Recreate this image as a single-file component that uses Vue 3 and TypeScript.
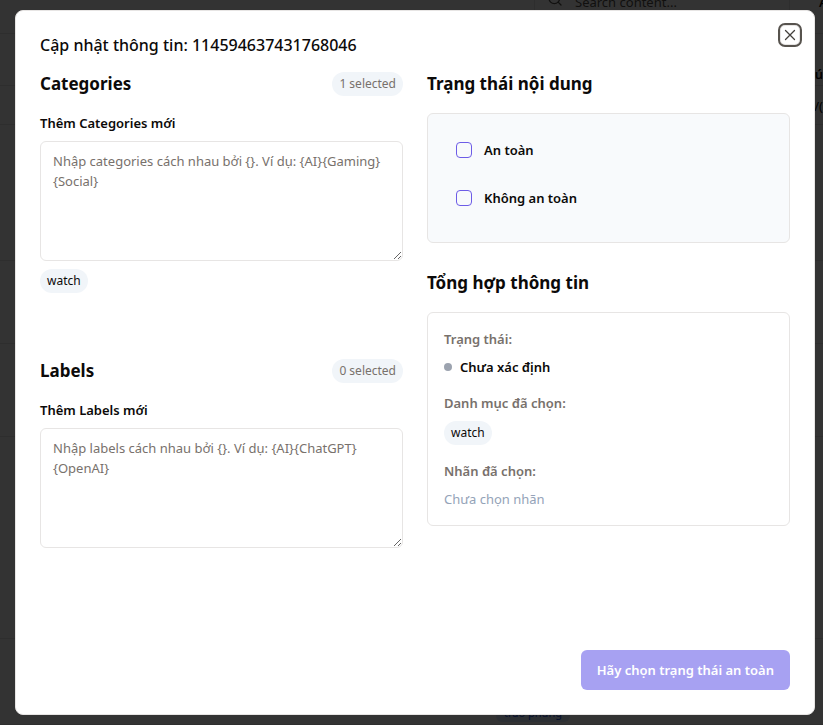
<script setup lang="ts">
import { computed, ref } from 'vue'

const categoriesText = ref('')
const labelsText = ref('')
const categories = ref<string[]>(['watch'])
const labels = ref<string[]>([])
const safe = ref(false)
const unsafe = ref(false)

const status = computed(() =>
  safe.value ? 'An toàn' : unsafe.value ? 'Không an toàn' : 'Chưa xác định'
)
</script>

<template>
  <div class="screen">
    <div class="page" aria-hidden="true">
      <header class="topbar">
        <div class="search">
          <svg width="16" height="16" viewBox="0 0 24 24" fill="none" stroke="currentColor" stroke-width="2" stroke-linecap="round"><circle cx="11" cy="11" r="8" /><path d="m21 21-4.3-4.3" /></svg>
          <span>Search content...</span>
        </div>
        <span class="account">A</span>
      </header>
      <div class="rows">
        <div class="row head">ú</div>
        <div class="row first">)/(</div>
        <div class="row tall"></div>
        <div class="row short"></div>
        <div class="row mid"></div>
        <div class="row large"></div>
        <div class="row last"><span class="topic">trao phung</span></div>
      </div>
    </div>
    <div class="overlay">
      <section class="dialog" role="dialog" aria-modal="true" aria-labelledby="dialog-title">
        <button class="close" type="button" aria-label="Close">
          <svg width="18" height="18" viewBox="0 0 18 18" fill="none" stroke="currentColor" stroke-width="1.3" stroke-linecap="round"><path d="M13.5 4.5l-9 9M4.5 4.5l9 9" /></svg>
        </button>
        <h2 id="dialog-title" class="title">Cập nhật thông tin: 114594637431768046</h2>
        <div class="columns">
          <div class="column">
            <section>
              <div class="group-head">
                <h3>Categories</h3>
                <span class="badge count">{{ categories.length }} selected</span>
              </div>
              <label class="label" for="categories">Thêm Categories mới</label>
              <textarea id="categories" v-model="categoriesText" placeholder="Nhập categories cách nhau bởi {}. Ví dụ: {AI}{Gaming}{Social}"></textarea>
              <div class="tags"><span v-for="c in categories" :key="c" class="badge">{{ c }}</span></div>
            </section>
            <section>
              <div class="group-head">
                <h3>Labels</h3>
                <span class="badge count">{{ labels.length }} selected</span>
              </div>
              <label class="label" for="labels">Thêm Labels mới</label>
              <textarea id="labels" v-model="labelsText" placeholder="Nhập labels cách nhau bởi {}. Ví dụ: {AI}{ChatGPT}{OpenAI}"></textarea>
              <div class="tags"><span v-for="l in labels" :key="l" class="badge">{{ l }}</span></div>
            </section>
          </div>
          <div class="column side">
            <section>
              <div class="group-head"><h3>Trạng thái nội dung</h3></div>
              <div class="card options">
                <label class="option"><input v-model="safe" type="checkbox" />An toàn</label>
                <label class="option"><input v-model="unsafe" type="checkbox" />Không an toàn</label>
              </div>
            </section>
            <section>
              <div class="group-head"><h3>Tổng hợp thông tin</h3></div>
              <div class="card summary">
                <div class="item">
                  <span class="caption">Trạng thái:</span>
                  <span class="status"><span class="dot"></span>{{ status }}</span>
                </div>
                <div class="item">
                  <span class="caption">Danh mục đã chọn:</span>
                  <div class="chips"><span v-for="c in categories" :key="c" class="badge">{{ c }}</span></div>
                </div>
                <div class="item">
                  <span class="caption">Nhãn đã chọn:</span>
                  <span class="empty">Chưa chọn nhãn</span>
                </div>
              </div>
            </section>
          </div>
        </div>
        <footer class="footer">
          <button class="submit" type="button" disabled>Hãy chọn trạng thái an toàn</button>
        </footer>
      </section>
    </div>
  </div>
</template>

<style>
body { margin: 0; background: #333; }
</style>

<style scoped>
* { box-sizing: border-box; }
.screen {
  min-height: 100vh;
  display: grid;
  font-family: "Segoe UI", "Noto Sans", sans-serif;
  font-size: 13px;
  line-height: 20px;
  color: #0c0a09;
}
.screen > * { grid-area: 1 / 1; min-width: 0; }
.page {
  height: 100vh;
  overflow: hidden;
  display: flex;
  flex-direction: column;
  background: #fff;
}
.topbar {
  height: 34px;
  flex: none;
  display: flex;
  justify-content: flex-end;
  align-items: flex-start;
  gap: 29px;
  border-bottom: 1px solid #e7e5e4;
}
.search {
  width: 256px;
  height: 24px;
  display: flex;
  gap: 12px;
  padding-left: 12px;
  border: 1px solid #e7e5e4;
  border-top: 0;
  color: #57534e;
  line-height: 4px;
}
.search svg { margin-top: -9px; }
.account { width: 4px; font-weight: 600; line-height: 4px; }
.rows { flex: 1; display: flex; flex-direction: column; text-align: right; }
.row { flex: none; border-bottom: 1px solid #e7e5e4; }
.head { height: 52px; padding-top: 30px; font-weight: 600; }
.first { height: 39px; padding-top: 10px; }
.tall { height: 136px; }
.short { height: 83px; }
.mid { height: 93px; }
.large { height: 202px; }
.last { height: 86px; display: flex; justify-content: center; align-items: flex-end; padding: 0 0 2px 243px; }
.topic {
  padding: 0 8px;
  border-radius: 6px;
  background: #dbeafe;
  color: #1d4ed8;
  font-size: 11px;
  line-height: 18px;
}
.overlay {
  display: flex;
  justify-content: center;
  align-items: center;
  padding: 8px 8px 8px 15px;
  background: rgba(0, 0, 0, 0.8);
}
.dialog {
  position: relative;
  width: 100%;
  max-width: 800px;
  padding: 24px;
  border: 1px solid #e7e5e4;
  border-radius: 8px;
  background: #fff;
}
.close {
  position: absolute;
  top: 14px;
  right: 14px;
  width: 20px;
  height: 20px;
  display: grid;
  place-items: center;
  padding: 0;
  border: 1px solid #e7e5e4;
  border-radius: 5px;
  background: #fff;
  color: #44403c;
  outline: 2px solid #57534e;
  outline-offset: 0;
}
h2, h3 { margin: 0; }
.title { font-size: 16px; line-height: 20px; font-weight: 500; }
.columns { display: grid; grid-template-columns: 1fr 1fr; gap: 24px; padding-top: 16px; }
.column { display: flex; flex-direction: column; gap: 24px; min-width: 0; }
.side { gap: 27px; }
.group-head {
  display: flex;
  align-items: center;
  justify-content: space-between;
  height: 26px;
  margin-bottom: 16px;
}
h3 { font-size: 17px; line-height: 26px; font-weight: 700; }
.badge {
  display: inline-flex;
  align-items: center;
  height: 24px;
  padding: 0 7px;
  border-radius: 12px;
  background: #f1f5f9;
  font-size: 12px;
  line-height: 24px;
}
.count { color: #78716c; }
.label { display: block; margin-bottom: 8px; font-weight: 600; }
textarea {
  display: block;
  width: 100%;
  height: 120px;
  padding: 9px 12px;
  border: 1px solid #e7e5e4;
  border-radius: 6px;
  background: #fff;
  color: inherit;
  font: inherit;
  resize: vertical;
}
textarea::placeholder { color: #78716c; opacity: 1; }
.tags { display: flex; flex-wrap: wrap; gap: 8px; min-height: 73px; padding-top: 8px; align-items: flex-start; }
.card { border: 1px solid #e7e5e4; border-radius: 6px; }
.options { display: flex; flex-direction: column; gap: 16px; padding: 20px 28px 28px; background: #f8fafc; }
.option { display: flex; align-items: center; gap: 12px; height: 32px; font-weight: 600; }
.option input {
  appearance: none;
  width: 16px;
  height: 16px;
  margin: 0;
  border: 1px solid #6d5ce7;
  border-radius: 4px;
}
.option input:checked { background: #6d5ce7; }
.summary { display: flex; flex-direction: column; gap: 16px; padding: 16px; }
.item { display: flex; flex-direction: column; gap: 8px; }
.caption { color: #78716c; font-weight: 600; }
.status { display: flex; align-items: center; gap: 8px; font-weight: 600; }
.dot { width: 8px; height: 8px; border-radius: 50%; background: #9ca3af; }
.chips { display: flex; flex-wrap: wrap; gap: 8px; }
.empty { color: #94a3b8; }
.footer { display: flex; justify-content: flex-end; padding-top: 29px; }
.submit {
  height: 40px;
  padding: 0 16px;
  border: 0;
  border-radius: 6px;
  background: #a7a1f2;
  color: #fff;
  font: inherit;
  font-weight: 600;
}
</style>
